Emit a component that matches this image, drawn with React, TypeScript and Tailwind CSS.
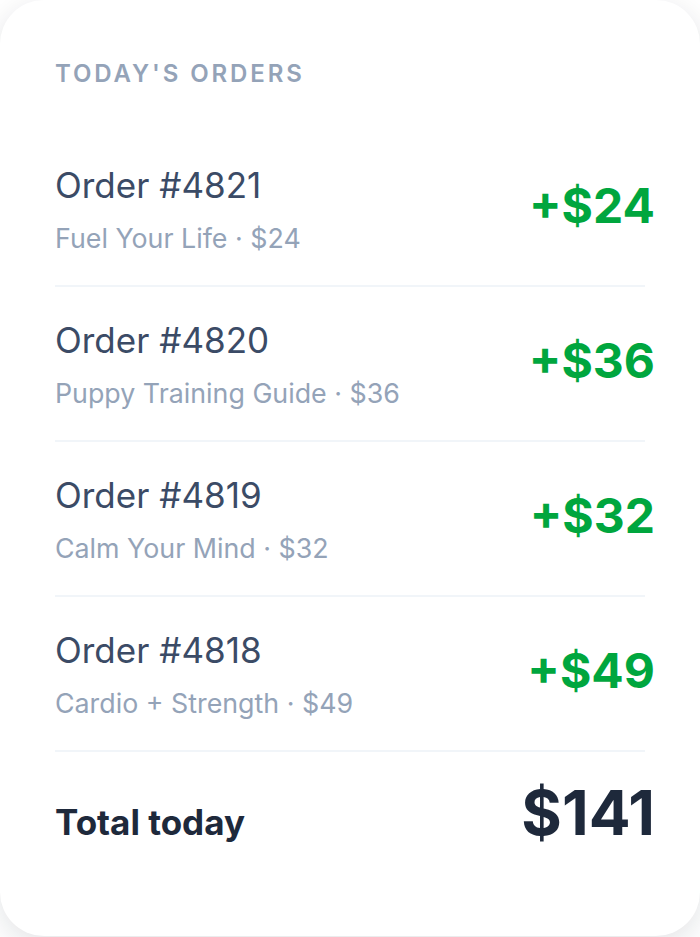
const orders = [
  { id: "4821", name: "Fuel Your Life", amount: 24 },
  { id: "4820", name: "Puppy Training Guide", amount: 36 },
  { id: "4819", name: "Calm Your Mind", amount: 32 },
  { id: "4818", name: "Cardio + Strength", amount: 49 },
];

function OrderRow({ id, name, amount }: { id: string; name: string; amount: number }) {
  return (
    <div className="flex items-center justify-between border-b-2 border-[#f1f5f9] pt-[33px] pb-[31px]">
      <div className="flex flex-col">
        <p className="text-[35px] leading-[40px] text-[#3b4b66]">Order #{id}</p>
        <p className="mt-[17px] text-[26.8px] leading-[32px] text-[#94a3b8]">
          {name} · ${amount}
        </p>
      </div>
      <p className="-mr-[10px] mb-2 text-[48px] leading-none font-bold text-[#00a63e]">
        +${amount}
      </p>
    </div>
  );
}

export default function App() {
  const total = orders.reduce((sum, o) => sum + o.amount, 0);

  return (
    <div className="min-h-screen bg-white font-['Inter',sans-serif]">
      <div className="h-[936px] w-full rounded-[44px] bg-white pt-[58px] pl-[55px] pr-[55px] shadow-[0_8px_30px_rgba(15,23,42,0.12)]">
        <h2 className="mb-[42px] text-[24px] leading-[32px] font-semibold tracking-[0.12em] text-[#94a3b8] uppercase">
          Today's Orders
        </h2>

        {orders.map((o) => (
          <OrderRow key={o.id} {...o} />
        ))}

        <div className="flex items-baseline justify-between pt-[30px]">
          <p className="text-[35px] leading-[40px] font-bold text-[#1e293b]">Total today</p>
          <p className="-mr-[10px] text-[62px] leading-none font-bold text-[#1e293b]">
            ${total}
          </p>
        </div>
      </div>
    </div>
  );
}
